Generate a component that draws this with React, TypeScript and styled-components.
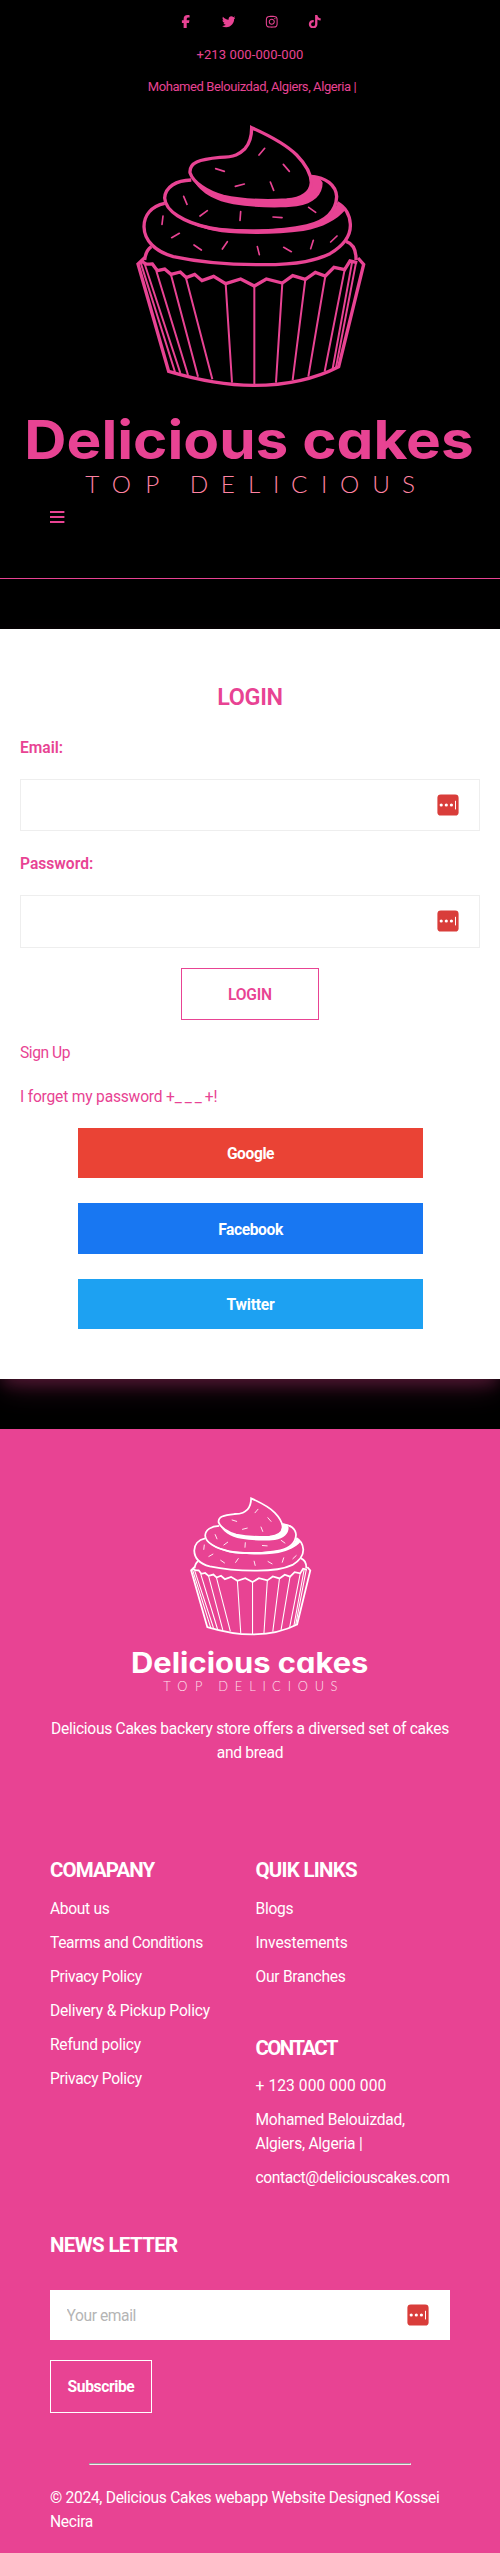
import React from 'react';
import styled, { createGlobalStyle } from 'styled-components';
import { FaFacebookF, FaTwitter, FaInstagram, FaTiktok } from 'react-icons/fa6';

const pink = '#e84393';

const GlobalStyle = createGlobalStyle`
  * { box-sizing: border-box; }
  body {
    margin: 0;
    background: #000;
    font-family: Roboto, "Liberation Sans", sans-serif;
    font-size: 15.6px;
    line-height: 24px;
  }
  a { color: inherit; text-decoration: none; }
  h2, h3, p, ul { margin: 0; padding: 0; }
`;

/* ---------- text ---------- */

const Tracked = styled.span<{ $track?: number }>`
  letter-spacing: ${(p) => p.$track ?? 0}px;
`;

/* ---------- header ---------- */

const Header = styled.header`
  display: flex;
  flex-direction: column;
  background: #000;
  color: ${pink};
  border-bottom: 1px solid ${pink};
`;

const TopBar = styled.div`
  display: flex;
  flex-direction: column;
  align-items: center;
  gap: 12px;
  padding: 10px 0 13px;
  font-size: 13px;
  line-height: 20px;
`;

const Socials = styled.nav`
  display: flex;
  align-items: center;
  gap: 29.4px;
  height: 23px;
  font-size: 13.5px;
`;

const Address = styled.span`
  padding-left: 4px;
  letter-spacing: -0.42px;
`;

const HeaderLogo = styled.div`
  height: 390px;
  svg { display: block; width: 500px; height: 390px; }
`;

const MenuButton = styled.button`
  display: block;
  margin: 9px 0 53px 50px;
  padding: 0;
  width: 15px;
  height: 16px;
  border: 0;
  background: none;
  color: inherit;
  svg { display: block; }
`;

/* ---------- login ---------- */

const Main = styled.main`
  background: #000;
  padding: 50px 0;
`;

const Card = styled.form`
  display: flex;
  flex-direction: column;
  padding: 52px 20px 50px;
  background: #fff;
  color: ${pink};
  box-shadow: 0 13px 27px -5px rgba(232, 67, 147, 0.22), 0 8px 14px -2px rgba(232, 67, 147, 0.2);
`;

const CardTitle = styled.h2`
  font-size: 23.4px;
  font-weight: 600;
  line-height: 32px;
  text-align: center;
  letter-spacing: -0.35px;
  margin-bottom: 23px;
`;

const Label = styled.label`
  font-weight: 600;
`;

const Field = styled.div<{ $height: number }>`
  display: flex;
  align-items: center;
  height: ${(p) => p.$height}px;
  margin: 19px 0 21px;
  padding: 0 20px ${(p) => p.$height - 52}px 0;
  border: 1px solid #eee;
  background: #fff;
  & + button { margin-top: -1px; }
`;

const Input = styled.input`
  flex: 1;
  min-width: 0;
  height: 100%;
  padding: 2px 16.5px 0;
  border: 0;
  outline: 0;
  background: transparent;
  font: inherit;
  letter-spacing: -0.41px;
  &::placeholder { color: #b5b5b5; opacity: 1; }
`;

const LoginButton = styled.button`
  align-self: center;
  width: 138px;
  height: 52px;
  padding: 1px 0 0;
  border: 1px solid ${pink};
  background: #fff;
  color: ${pink};
  font: 600 15.6px/24px Roboto, sans-serif;
  letter-spacing: -0.2px;
`;

const CardLinks = styled.div`
  display: flex;
  flex-direction: column;
  align-items: flex-start;
  gap: 20px;
  margin: 21px 0 19px;
`;

const Providers = styled.div`
  display: flex;
  flex-direction: column;
  gap: 25px;
  padding: 0 57px 0 58px;
`;

const ProviderButton = styled.a<{ $color: string; $height: number; $track: number }>`
  display: flex;
  align-items: center;
  justify-content: center;
  height: ${(p) => p.$height}px;
  padding-top: 2px;
  background: ${(p) => p.$color};
  color: #fff;
  font-weight: 700;
  letter-spacing: ${(p) => p.$track}px;
`;

/* ---------- footer ---------- */

const Footer = styled.footer`
  display: flex;
  flex-direction: column;
  padding: 60px 50px 19px;
  background: ${pink};
  color: #fff;
`;

const About = styled.section`
  display: flex;
  flex-direction: column;
  align-items: center;
  gap: 22px;
  text-align: center;
  svg { display: block; width: 264.5px; height: 206px; }
`;

const Intro = styled.p`
  width: 404px;
  margin: 0 -2px;
  letter-spacing: -0.29px;
`;

const Columns = styled.div`
  display: grid;
  grid-template-columns: 205.5px 1fr;
  margin: 92px 0 42px;
`;

const Column = styled.div`
  display: flex;
  flex-direction: column;
  gap: 46px;
`;

const Heading = styled.h3<{ $track: number }>`
  font-size: 20.5px;
  font-weight: 700;
  line-height: 26px;
  white-space: nowrap;
  letter-spacing: ${(p) => p.$track}px;
`;

const LinkList = styled.ul`
  display: flex;
  flex-direction: column;
  gap: 10px;
  margin-top: 13.5px;
  list-style: none;
  white-space: nowrap;
`;

const Newsletter = styled.form`
  display: flex;
  flex-direction: column;
  align-items: flex-start;
`;

const EmailField = styled.div`
  display: flex;
  align-items: center;
  align-self: stretch;
  height: 50px;
  margin: 32px 0 20px;
  padding-right: 21px;
  background: #fff;
`;

const SubscribeButton = styled.button`
  width: 102px;
  height: 53px;
  padding: 0;
  border: 1px solid #fff;
  background: transparent;
  color: #fff;
  font: 700 15.6px/24px Roboto, sans-serif;
  letter-spacing: -0.39px;
`;

const Rule = styled.hr`
  width: 322px;
  height: 2px;
  margin: 50px auto 21px;
  border: 1px solid;
  border-color: #9a9a9a #eee #eee #9a9a9a;
`;

const Copyright = styled.p`
  letter-spacing: -0.3px;
`;

/* ---------- drawings ---------- */

const Wordmark = styled.text`
  font-family: Inter, sans-serif;
  font-weight: 700;
  font-size: 159px;
  font-feature-settings: "cv11" 1;
`;

const Tagline = styled.text`
  font-family: Lato, sans-serif;
  font-weight: 300;
  font-size: 73px;
`;

function Logo({ color, background, tagline }: { color: string; background: string; tagline: string }) {
  return (
    <svg viewBox="0 330 1500 1170" role="img" aria-label="Delicious cakes">
      <g transform="translate(360 330)" fill="none" stroke={color} strokeWidth="10" strokeLinejoin="miter">
        {/* cup rim and frosting base */}
        <path d="M74 450C76 432 84 417 94 410M678 394C698 401 709 420 708 450" />
        {/* bottom frosting ring */}
        <path d="M134 280C94 288 72 316 72 350C73 392 106 425 160 440C230 455 330 465 430 464C540 464 590 450 630 431C672 406 693 376 691 342C689 314 675 291 652 278" />
        {/* shade under the middle ring */}
        <path
          d="M134 280C160 318 220 343 300 355C400 362 500 358 570 345C610 336 640 316 652 278L676 300C650 330 610 352 550 363C470 374 380 374 305 367C220 352 160 322 134 280Z"
          fill={color}
          stroke="none"
        />
        <path d="M214 210C168 211 136 231 134 264C136 303 190 337 270 354C360 370 480 365 560 348C620 334 648 306 650 260C648 224 616 202 574 199" />
        {/* shade under the top swirl */}
        <path
          d="M210 190C226 232 280 258 350 267C420 274 480 273 520 264C560 254 575 228 570 196C588 194 600 202 608 218C608 254 582 280 530 289C470 296 400 292 340 283C270 270 228 238 210 190Z"
          fill={color}
          stroke="none"
        />
        <path
          d="M395 53C460 82 500 105 530 135C558 164 573 190 574 218C572 248 550 266 500 270C430 274 370 272 310 259C262 246 220 218 210 188C208 158 236 148 300 142C345 142 358 132 375 116C392 96 395 75 395 53Z"
          fill={background}
        />
        {/* sprinkles */}
        <path
          strokeWidth="5"
          strokeLinecap="round"
          d="M434 115L417 135M287 176L313 184M490 163L508 184M346 229L373 222M451 216L461 241M191 259L201 283M262 302L240 318M362 305L360 331M459 321L486 323M566 292L587 307M129 318L126 343M178 370L155 383M222 405L244 420M322 395L307 417M412 410L418 434M491 412L514 425M580 391L572 416M651 378L632 396"
        />
        {/* scalloped paper edge */}
        <path d="M74 443L54 462L146 784C220 806 310 826 400 826C500 826 590 804 656 770L731 463L714 444" />
        <path d="M64 452C78 466 82 462 97 462L112 482L134 477L153 493L181 486L199 503L224 493L246 512L281 499L317 521L362 507L403 528L439 507L487 519L518 497L556 508L586 487L616 498L642 472L674 479L690 453L712 458" />
        {/* paper folds */}
        <path
          strokeWidth="6"
          d="M62 458L165 786M74 462L181 789M109 483L204 795M153 494L234 800M198 504L277 808M317 521L336 818M403 528V824M487 519L468 818M556 508L518 810M616 498L565 800M674 479L614 784M696 458L638 776M708 458L648 772"
        />
      </g>
      <Wordmark x="73" y="1377" fill={color} textLength="1348" lengthAdjust="spacingAndGlyphs">
        Delicious cakes
      </Wordmark>
      <Tagline x="256 335 436 569 662 744 819 873 963 1020 1117 1206" y="1479" fill={tagline}>
        TOPDELICIOUS
      </Tagline>
    </svg>
  );
}

function MenuIcon() {
  return (
    <svg width="15" height="16" viewBox="0 0 15 16" fill="currentColor">
      <path d="M0 2H14.4V4H0ZM0 7H14.4V9H0ZM0 12H14.4V14H0Z" />
    </svg>
  );
}

function PasswordManagerIcon() {
  return (
    <svg width="22" height="22" viewBox="0 0 22 22">
      <rect x="0.4" y="0.4" width="21.2" height="21.2" rx="3.4" fill="#d93d3a" />
      <circle cx="4.2" cy="11" r="1.6" fill="#fff" />
      <circle cx="9.3" cy="11" r="1.6" fill="#fff" />
      <circle cx="14.4" cy="11" r="1.6" fill="#fff" />
      <rect x="18" y="6.8" width="1" height="8.6" fill="#fff" />
    </svg>
  );
}

/* ---------- page ---------- */

type Item = [text: string, track: number];

const company: Item[] = [
  ['About us', -0.33],
  ['Tearms and Conditions', -0.36],
  ['Privacy Policy', -0.3],
  ['Delivery & Pickup Policy', -0.2],
  ['Refund policy', -0.24],
  ['Privacy Policy', -0.3],
];

const quickLinks: Item[] = [
  ['Blogs', -0.29],
  ['Investements', -0.12],
  ['Our Branches', -0.27],
];

function Links({ items }: { items: Item[] }) {
  return (
    <LinkList>
      {items.map(([text, track], i) => (
        <li key={i}>
          <Tracked as="a" $track={track}>
            {text}
          </Tracked>
        </li>
      ))}
    </LinkList>
  );
}

export default function App() {
  return (
    <>
      <GlobalStyle />
      <Header>
        <TopBar>
          <Socials>
            <FaFacebookF />
            <FaTwitter />
            <FaInstagram />
            <FaTiktok />
          </Socials>
          <Tracked $track={0.1}>+213 000-000-000</Tracked>
          <Address>Mohamed Belouizdad, Algiers, Algeria |</Address>
        </TopBar>
        <HeaderLogo>
          <Logo color={pink} background="#000" tagline="#ff82a2" />
        </HeaderLogo>
        <MenuButton type="button" aria-label="Menu">
          <MenuIcon />
        </MenuButton>
      </Header>

      <Main>
        <Card>
          <CardTitle>LOGIN</CardTitle>
          <Label>Email:</Label>
          <Field $height={52}>
            <Input type="email" />
            <PasswordManagerIcon />
          </Field>
          <Label>Password:</Label>
          <Field $height={53}>
            <Input type="password" />
            <PasswordManagerIcon />
          </Field>
          <LoginButton type="button">LOGIN</LoginButton>
          <CardLinks>
            <Tracked as="a" $track={-0.45}>Sign Up</Tracked>
            <Tracked as="a" $track={-0.2}>
              I forget my password +<Tracked $track={3}>___</Tracked>+!
            </Tracked>
          </CardLinks>
          <Providers>
            <ProviderButton $color="#ea4335" $height={50} $track={-0.41}>Google</ProviderButton>
            <ProviderButton $color="#1877f2" $height={51} $track={-0.41}>Facebook</ProviderButton>
            <ProviderButton $color="#1da1f2" $height={50} $track={-0.19}>Twitter</ProviderButton>
          </Providers>
        </Card>
      </Main>

      <Footer>
        <About>
          <Logo color="#fff" background={pink} tagline="#fde0ec" />
          <Intro>Delicious Cakes backery store offers a diversed set of cakes and bread</Intro>
        </About>
        <Columns>
          <Column>
            <div>
              <Heading $track={-0.92}>COMAPANY</Heading>
              <Links items={company} />
            </div>
          </Column>
          <Column>
            <div>
              <Heading $track={-0.77}>QUIK LINKS</Heading>
              <Links items={quickLinks} />
            </div>
            <div>
              <Heading $track={-1.65}>CONTACT</Heading>
              <LinkList>
                <Tracked as="li" $track={0.08}>+ 123 000 000 000</Tracked>
                <Tracked as="li" $track={-0.24}>
                  Mohamed Belouizdad,
                  <br />
                  Algiers, Algeria |
                </Tracked>
                <Tracked as="li" $track={-0.39}>contact@deliciouscakes.com</Tracked>
              </LinkList>
            </div>
          </Column>
        </Columns>
        <Newsletter>
          <Heading $track={-0.65}>NEWS LETTER</Heading>
          <EmailField>
            <Input type="email" placeholder="Your email" />
            <PasswordManagerIcon />
          </EmailField>
          <SubscribeButton type="button">Subscribe</SubscribeButton>
        </Newsletter>
        <Rule />
        <Copyright>© 2024, Delicious Cakes webapp Website Designed Kossei Necira</Copyright>
      </Footer>
    </>
  );
}
